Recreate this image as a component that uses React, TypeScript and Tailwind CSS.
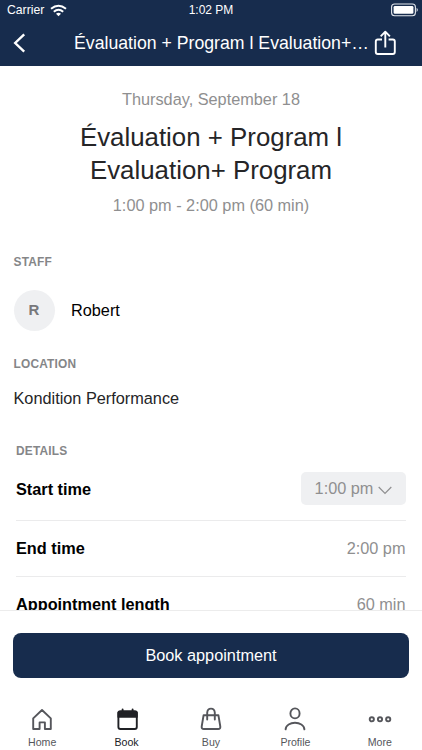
import React from "react";

const tabs: { label: string; active?: boolean; icon: React.ReactNode }[] = [
  {
    label: "Home",
    icon: (
      <path d="M3.2 10.4 L12 2 L20.8 10.4 V21 H14.9 V14.4 H9.6 V21 H3.2 Z" />
    ),
  },
  {
    label: "Book",
    active: true,
    icon: (
      <>
        <rect x="3.4" y="3.2" width="18.4" height="17.8" rx="2" />
        <path d="M3.4 4.5 h18.4 v4.4 h-18.4z" fill="currentColor" />
        <path d="M7.6 1.5v3M17.6 1.5v3" />
      </>
    ),
  },
  {
    label: "Buy",
    icon: (
      <>
        <path d="M4.6 7.2 H19.4 L21.3 18.5 Q21.6 21 19.2 21 H4.8 Q2.4 21 2.7 18.5 Z" />
        <path d="M8.2 11.6V4.6 Q8.5 0.6 12 0.6 Q15.5 0.6 15.8 4.6 V11.6" />
      </>
    ),
  },
  {
    label: "Profile",
    icon: (
      <>
        <ellipse cx="12" cy="5.4" rx="4.6" ry="5" />
        <path d="M2.6 21.4 C3 12.6 21 12.6 21.4 21.4" />
      </>
    ),
  },
  {
    label: "More",
    icon: (
      <>
        <circle cx="3.8" cy="11.3" r="2.1" />
        <circle cx="12" cy="11.3" r="2.1" />
        <circle cx="20.2" cy="11.3" r="2.1" />
      </>
    ),
  },
];

function StatusBar() {
  return (
    <div className="grid h-5 grid-cols-3 items-center pr-[3px] pl-[7px] text-[12.2px] leading-5">
      <div className="flex items-center gap-[6px]">
        <span>Carrier</span>
        <svg width="17" height="13" viewBox="0 0 17 13" fill="none" stroke="white" strokeWidth="2">
          <path d="M1 4.8 Q8.5 -1.4 16 4.8" />
          <path d="M3.8 7.7 Q8.5 3.9 13.2 7.7" />
          <path d="M6 9.7 Q8.5 7.8 11 9.7 L8.5 12.2Z" fill="white" stroke="none" />
        </svg>
      </div>
      <span className="-ml-[4px] text-center text-[12px]">1:02 PM</span>
      <svg className="justify-self-end" width="28" height="14" viewBox="0 0 28 14" fill="none">
        <rect x="0.6" y="1" width="23.8" height="11.8" rx="3" stroke="#e3e7ee" strokeWidth="1.1" />
        <rect x="2.6" y="3" width="19.8" height="7.8" rx="1.3" fill="white" />
        <path d="M25.6 4.8 Q28 6.9 25.6 9Z" fill="#e3e7ee" />
      </svg>
    </div>
  );
}

function SectionLabel({ children }: { children: React.ReactNode }) {
  return (
    <h2 className="text-[11.9px] leading-4 font-bold tracking-[0.2px] text-[#858688]">{children}</h2>
  );
}

export default function App() {
  return (
    <div className="flex h-[750px] w-[422px] flex-col overflow-hidden bg-white font-['Liberation_Sans',Arial,sans-serif] text-[16.3px] text-black">
      <header className="h-[66px] shrink-0 bg-[#172c4d] text-white">
        <StatusBar />
        <div className="flex h-[46px] items-center">
          <svg className="ml-[13px] shrink-0" width="14" height="20" viewBox="0 0 14 20" fill="none" stroke="white" strokeWidth="2.4">
            <path d="M11.2 1.4 L2.2 10 L11.2 18.6" />
          </svg>
          <h1 className="ml-[47px] w-[297px] shrink-0 text-[17.7px] leading-6 whitespace-nowrap">
            Évaluation + Program l Evaluation+…
          </h1>
          <svg className="ml-[3px] shrink-0" width="24" height="26" viewBox="0 0 24 26" fill="none" stroke="white" strokeWidth="1.9" strokeLinejoin="round">
            <path d="M8 9.5H3.8Q1.8 9.5 1.8 11.5V22Q1.8 24 3.8 24H18.8Q20.8 24 20.8 22V11.5Q20.8 9.5 18.8 9.5H14.6M11.3 17.5V2M6.7 6.3L11.3 1.7L15.9 6.3" />
          </svg>
        </div>
      </header>

      <main className="h-[545px] shrink-0 overflow-hidden border-b border-[#ececec]">
        <section className="flex flex-col items-center pt-[23px] text-center text-[#8f8f90]">
          <p className="leading-5">Thursday, September 18</p>
          <p className="mt-[12px] text-[25.85px] leading-[33px] text-[#252527]">
            Évaluation + Program l<br />
            Evaluation+ Program
          </p>
          <p className="mt-[8px] leading-5">1:00 pm - 2:00 pm (60 min)</p>
        </section>

        <section className="mt-[39px] px-[13.5px]">
          <SectionLabel>STAFF</SectionLabel>
          <div className="mt-[20px] flex items-center gap-[16.5px]">
            <div className="flex size-[41px] items-center justify-center rounded-full bg-[#eff0f2] text-[15px] font-bold text-[#77787b]">
              R
            </div>
            <span>Robert</span>
          </div>
        </section>

        <section className="mt-[25px] px-[13.5px]">
          <SectionLabel>LOCATION</SectionLabel>
          <p className="mt-[16px] leading-5 text-[#252527]">Kondition Performance</p>
        </section>

        <section className="mt-[35px] px-4">
          <SectionLabel>DETAILS</SectionLabel>
          <dl>
            <div className="flex h-[62px] items-center justify-between border-b border-[#ebebec]">
              <dt className="font-bold">Start time</dt>
              <dd className="-mt-[2px] flex h-[33px] w-[105px] items-center justify-center gap-[5px] rounded-[5px] bg-[#eff0f2] text-[#8f8f90]">
                1:00 pm
                <svg className="mt-1" width="14" height="9" viewBox="0 0 14 9" fill="none" stroke="currentColor" strokeWidth="1.2">
                  <path d="M0.7 1L7 7.5L13.3 1" />
                </svg>
              </dd>
            </div>
            <div className="flex h-14 items-center justify-between border-b border-[#ebebec]">
              <dt className="font-bold">End time</dt>
              <dd className="pr-[0.5px] text-[#8f8f90]">2:00 pm</dd>
            </div>
            <div className="flex h-[54px] items-center justify-between">
              <dt className="font-bold">Appointment length</dt>
              <dd className="pr-[0.5px] text-[#8f8f90]">60 min</dd>
            </div>
          </dl>
        </section>
      </main>

      <div className="px-[13px] pt-[22px]">
        <button className="h-[45px] w-full rounded-lg bg-[#172c4d] text-white">Book appointment</button>
      </div>

      <nav className="mt-[30px] grid grid-cols-5">
        {tabs.map((tab) => (
          <div
            key={tab.label}
            className={`flex flex-col items-center ${tab.active ? "text-[#202125]" : "text-[#55565b]"}`}
          >
            <svg className="overflow-visible" width="24" height="24" viewBox="0 0 24 24" fill="none" stroke="currentColor" strokeWidth="1.9" strokeLinejoin="round" strokeLinecap="round">
              {tab.icon}
            </svg>
            <span className="mt-[4px] text-[10.6px] leading-3">{tab.label}</span>
          </div>
        ))}
      </nav>
    </div>
  );
}
